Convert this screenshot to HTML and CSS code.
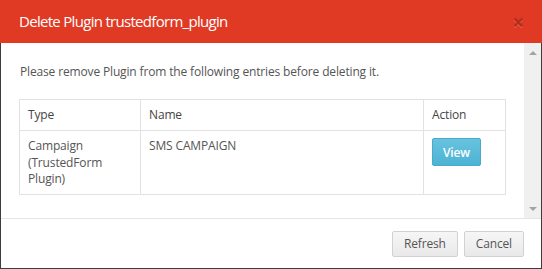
FILE: index.html
```html
<!DOCTYPE html>
<html lang="en">
<head>
    <meta charset="UTF-8">
    <meta name="viewport" content="width=device-width, initial-scale=1.0">
    <title>Delete Plugin</title>
    <link rel="stylesheet" href="styles.css">
</head>
<body>
    <div class="modal">
        <div class="modal-header">
            <h4 class="modal-title">Delete Plugin trustedform_plugin</h4>
            <span class="close">&times;</span>
        </div>

        <div class="modal-main">
            <div class="modal-body">
                <p class="intro">Please remove Plugin from the following entries before deleting it.</p>
                <table class="entries">
                    <thead>
                        <tr>
                            <th class="col-type">Type</th>
                            <th class="col-name">Name</th>
                            <th class="col-action">Action</th>
                        </tr>
                    </thead>
                    <tbody>
                        <tr>
                            <td>Campaign (TrustedForm Plugin)</td>
                            <td>SMS CAMPAIGN</td>
                            <td><button class="btn btn-info">View</button></td>
                        </tr>
                    </tbody>
                </table>
            </div>
            <div class="scrollbar">
                <span class="arrow arrow-up"></span>
                <span class="arrow arrow-down"></span>
            </div>
        </div>

        <div class="modal-footer">
            <button class="btn btn-default">Refresh</button>
            <button class="btn btn-default">Cancel</button>
        </div>
    </div>
</body>
</html>
```

FILE: styles.css
```css
:root {
    --header-color: #e03a24;
    --text-color: #555;
    --line-color: #e2e2e2;
}

* {
    box-sizing: border-box;
}

body {
    margin: 0;
    font-family: 'Open Sans', 'Liberation Sans', sans-serif;
    font-size: 12px;
    line-height: 1.42857;
    letter-spacing: -0.15px;
    color: var(--text-color);
    background-color: white;
}

.modal {
    width: 542px;
    height: 269px;
    display: flex;
    flex-direction: column;
    border: 1px solid #3d3d3d;
    border-top: none;
    background-color: white;
}

.modal-header {
    height: 43px;
    margin: 0 -1px;
    padding: 0 18px 0 19px;
    display: flex;
    align-items: center;
    justify-content: space-between;
    background-color: var(--header-color);
}

.modal-title {
    margin: 0;
    font-size: 15px;
    font-weight: normal;
    letter-spacing: -0.7px;
    color: white;
}

.close {
    font-size: 21px;
    font-weight: bold;
    line-height: 1;
    color: #000;
    opacity: 0.2;
    text-shadow: 0 1px 0 #fff;
    margin-top: 2px;
}

.modal-main {
    flex: 1;
    display: flex;
    min-height: 0;
}

.modal-body {
    flex: 1;
    padding: 20px 18px 0 18px;
}

.intro {
    margin: 0 0 18px 1px;
    line-height: 18px;
}

.entries {
    width: 487px;
    border-collapse: collapse;
    border: 1px solid var(--line-color);
}

.entries th,
.entries td {
    border: 1px solid var(--line-color);
    text-align: left;
    vertical-align: top;
}

.entries th {
    padding: 6px 8px;
    line-height: 18px;
    font-weight: normal;
    color: #444;
}

.entries td {
    padding: 7px 8px 6px;
    line-height: 16.5px;
}

.col-type {
    width: 121px;
}

.col-action {
    width: 82px;
}

.scrollbar {
    width: 17px;
    background-color: #f0f0f0;
    display: flex;
    flex-direction: column;
    justify-content: space-between;
    align-items: center;
    padding: 8px 0 7px;
}

.arrow {
    width: 0;
    height: 0;
    border-left: 4px solid transparent;
    border-right: 4px solid transparent;
}

.arrow-up {
    border-bottom: 4px solid #a3a3a3;
}

.arrow-down {
    border-top: 4px solid #a3a3a3;
}

.modal-footer {
    height: 50px;
    padding: 0 17px 0 0;
    display: flex;
    align-items: center;
    justify-content: flex-end;
    gap: 6px;
    border-top: 1px solid #e5e5e5;
}

.btn {
    font-family: inherit;
    font-size: 12px;
    letter-spacing: -0.15px;
    border-radius: 2px;
    cursor: pointer;
}

.btn-default {
    height: 26px;
    padding: 0 11px;
    color: var(--text-color);
    background: linear-gradient(#f6f6f6, #e9e9e9);
    border: 1px solid #d2d2d2;
}

.btn-info {
    height: 28px;
    padding: 0 10px;
    font-weight: 600;
    color: white;
    background: linear-gradient(#67c3de, #4db3d4);
    border: 1px solid #48abcb;
}
```
